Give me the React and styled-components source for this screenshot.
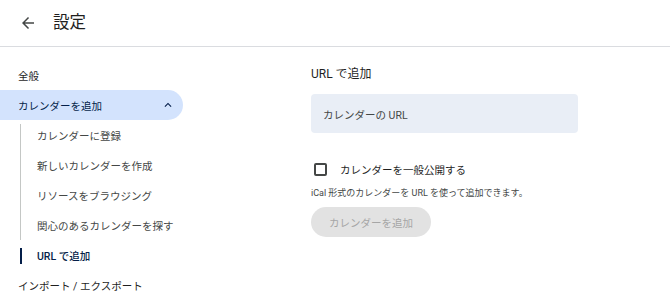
import React from "react";
import styled, { createGlobalStyle } from "styled-components";

const Global = createGlobalStyle`
  html, body { margin: 0; padding: 0; background: #fff; }
  body { font-family: Roboto, "Noto Sans CJK JP", "Noto Sans", sans-serif; color: #1f1f1f; }
  * { box-sizing: border-box; }
`;

const Page = styled.div`
  width: 670px;
  height: 307px;
  overflow: hidden;
  background: #fff;
`;

const Header = styled.header`
  height: 47px;
  display: flex;
  align-items: center;
  gap: 16px;
  padding: 0 0 1px 19px;
  border-bottom: 1px solid #dadce0;
`;

const BackButton = styled.button`
  width: 18px;
  height: 18px;
  padding: 0;
  border: 0;
  background: none;
  display: flex;
  align-items: center;
  justify-content: center;
  color: #444746;
`;

const Title = styled.h1`
  margin: 0;
  font-size: 16.5px;
  font-weight: 400;
  line-height: 20px;
  color: #1f1f1f;
`;

const Body = styled.div`
  display: flex;
`;

const Sidebar = styled.nav`
  width: 183px;
  padding-top: 13px;
  display: flex;
  flex-direction: column;
`;

const NavItem = styled.div`
  height: 30px;
  display: flex;
  align-items: center;
  justify-content: space-between;
  padding: 0 8px 0 18px;
  font-size: 10.5px;
  color: ${(p) => (p.$active ? "#041e49" : "#1f1f1f")};
  background: ${(p) => (p.$active ? "#d3e3fd" : "transparent")};
  border-radius: 0 15px 15px 0;
`;

const SubList = styled.div`
  margin-left: 20px;
  display: flex;
  flex-direction: column;
`;

const SubItem = styled.div`
  position: relative;
  height: 30px;
  display: flex;
  align-items: center;
  padding-left: 17px;
  font-size: 10.5px;
  font-weight: ${(p) => (p.$active ? 500 : 400)};
  color: ${(p) => (p.$active ? "#041e49" : "#444746")};
  &::before {
    content: "";
    position: absolute;
    left: 0;
    top: ${(p) => (p.$active ? "8px" : "0")};
    bottom: ${(p) => (p.$active ? "6px" : "0")};
    width: ${(p) => (p.$active ? "2px" : "1px")};
    background: ${(p) => (p.$active ? "#041e49" : "#c4c7c5")};
  }
`;

const SubFirst = styled(SubItem)`
  &::before { top: ${(p) => (p.$active ? "8px" : "4px")}; }
`;

const Main = styled.main`
  margin-left: 128px;
  display: flex;
  flex-direction: column;
  align-items: flex-start;
`;

const Heading = styled.h2`
  margin: 19px 0 0;
  font-size: 12px;
  line-height: 16px;
  font-weight: 400;
  color: #1f1f1f;
`;

const UrlField = styled.div`
  margin-top: 12px;
  width: 267px;
  height: 39px;
  border-radius: 4px;
  background: #e9eef6;
  display: flex;
  align-items: center;
  padding: 2px 0 0 12px;
  font-size: 10.5px;
  color: #444746;
`;

const CheckRow = styled.label`
  margin-top: 24px;
  height: 24px;
  display: flex;
  align-items: center;
  gap: 13px;
  padding-left: 3px;
  font-size: 10.5px;
  color: #1f1f1f;
`;

const CheckBox = styled.span`
  width: 13px;
  height: 13px;
  border: 2px solid #444746;
  border-radius: 2px;
`;

const Help = styled.p`
  margin: 6px 0 0;
  font-size: 9px;
  line-height: 12px;
  color: #444746;
`;

const AddButton = styled.button`
  margin-top: 8px;
  width: 120px;
  height: 30px;
  border: 0;
  border-radius: 15px;
  background: #e2e2e2;
  color: #a6a6a6;
  font-family: inherit;
  font-size: 10.5px;
  padding: 0;
`;

const ArrowBack = () => (
  <svg width="18" height="18" viewBox="0 0 24 24" fill="currentColor">
    <path d="M20 11H7.83l5.59-5.59L12 4l-8 8 8 8 1.41-1.41L7.83 13H20v-2z" />
  </svg>
);

const ExpandLess = () => (
  <svg width="14" height="14" viewBox="0 0 24 24" fill="#041e49">
    <path d="M12 8l-6 6 1.41 1.41L12 10.83l4.59 4.58L18 14z" />
  </svg>
);

export default function App() {
  return (
    <Page>
      <Global />
      <Header>
        <BackButton aria-label="戻る">
          <ArrowBack />
        </BackButton>
        <Title>設定</Title>
      </Header>
      <Body>
        <Sidebar>
          <NavItem>全般</NavItem>
          <NavItem $active>
            <span>カレンダーを追加</span>
            <ExpandLess />
          </NavItem>
          <SubList>
            <SubFirst>カレンダーに登録</SubFirst>
            <SubItem>新しいカレンダーを作成</SubItem>
            <SubItem>リソースをブラウジング</SubItem>
            <SubItem>関心のあるカレンダーを探す</SubItem>
            <SubItem $active>URL で追加</SubItem>
          </SubList>
          <NavItem>インポート / エクスポート</NavItem>
        </Sidebar>
        <Main>
          <Heading>URL で追加</Heading>
          <UrlField>カレンダーの URL</UrlField>
          <CheckRow>
            <CheckBox />
            カレンダーを一般公開する
          </CheckRow>
          <Help>iCal 形式のカレンダーを URL を使って追加できます。</Help>
          <AddButton>カレンダーを追加</AddButton>
        </Main>
      </Body>
    </Page>
  );
}
